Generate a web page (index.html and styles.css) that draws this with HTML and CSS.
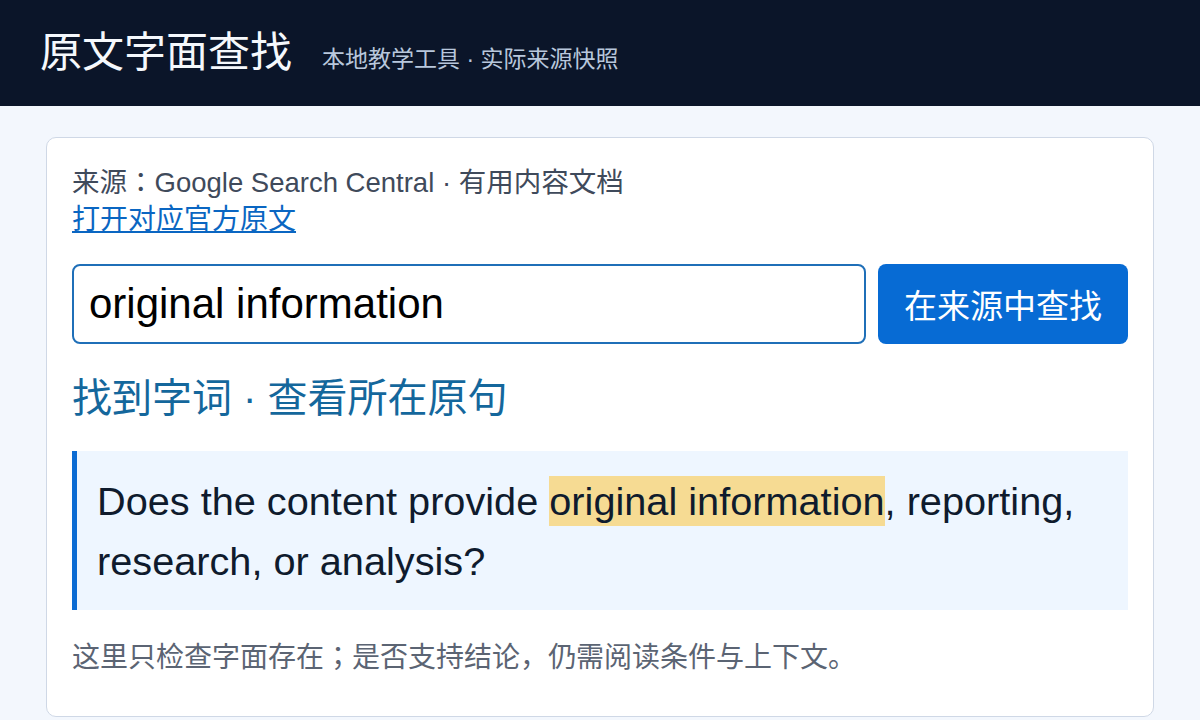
FILE: index.html
```html
<!DOCTYPE html>
<html>
  <head>
    <meta charset="utf-8">
    <title>原文字面查找</title>
    <link rel="stylesheet" href="styles.css">
  </head>
  <body>
    <header class="topbar">
      <div class="brand">
        <h1 class="brand_title">原文字面查找</h1>
        <span class="brand_sub">本地教学工具 · 实际来源快照</span>
      </div>
    </header>

    <main class="page">
      <section class="card">
        <p class="source">来源：Google Search Central · 有用内容文档</p>
        <a href="#" class="source_link">打开对应官方原文</a>

        <form class="search_row" onsubmit="return false">
          <input type="text" class="search_input" value="original information">
          <button type="submit" class="search_btn">在来源中查找</button>
        </form>

        <h2 class="result_title">找到字词 · 查看所在原句</h2>

        <blockquote class="quote">
          Does the content provide <mark class="hit">original information</mark>, reporting, research, or analysis?
        </blockquote>

        <p class="note">这里只检查字面存在；是否支持结论，仍需阅读条件与上下文。</p>
      </section>
    </main>
  </body>
</html>
```

FILE: styles.css
```css
* {
  box-sizing: border-box;
}
body {
  margin: 0;
  background-color: #f3f7fd;
  font-family: "Liberation Sans", "Noto Sans CJK JP", sans-serif;
  color: #0f1b2d;
}
.topbar {
  height: 106px;
  background-color: #0b1529;
  display: flex;
  align-items: center;
  padding: 0 40px;
}
.brand {
  display: flex;
  align-items: baseline;
  gap: 30px;
}
.brand_title {
  margin: 0;
  font-size: 42px;
  font-weight: 400;
  color: #f5f8fc;
  line-height: 1.2;
}
.brand_sub {
  font-size: 23px;
  color: #b8c7dc;
}
.page {
  padding: 31px 46px 0;
}
.card {
  background-color: #fff;
  border: 1px solid #cfd8e6;
  border-radius: 10px;
  padding: 26px 25px 40px;
}
.source {
  margin: 0;
  font-size: 27.5px;
  line-height: 37px;
  color: #3f4a5b;
}
.source_link {
  display: inline-block;
  font-size: 28px;
  line-height: 37px;
  color: #0a66c2;
}
.search_row {
  display: flex;
  gap: 12px;
  margin: 26px 0 0;
}
.search_input {
  flex: 1;
  height: 80px;
  border: 2px solid #1f6fb8;
  border-radius: 8px;
  padding: 0 15px;
  font-family: "Liberation Sans", Arial, sans-serif;
  font-size: 42px;
  color: #000;
  outline: none;
}
.search_btn {
  width: 250px;
  height: 80px;
  border: none;
  border-radius: 8px;
  background-color: #076bd4;
  color: #fff;
  font-family: "Liberation Sans", "Noto Sans CJK JP", sans-serif;
  font-size: 33px;
}
.result_title {
  margin: 30px 0 0;
  font-size: 40px;
  font-weight: 400;
  line-height: 48px;
  color: #14679c;
}
.quote {
  margin: 29px 0 0;
  padding: 20px 24px 19px 20px;
  border-left: 5px solid #0b6bd3;
  background-color: #eef6ff;
  font-size: 39.7px;
  line-height: 60px;
  color: #0f1b2d;
}
.hit {
  background-color: #f6db93;
  color: #0f1b2d;
  padding: 3px 0;
}
.note {
  margin: 29px 0 0;
  font-size: 28px;
  line-height: 37px;
  color: #5b6473;
}
```
